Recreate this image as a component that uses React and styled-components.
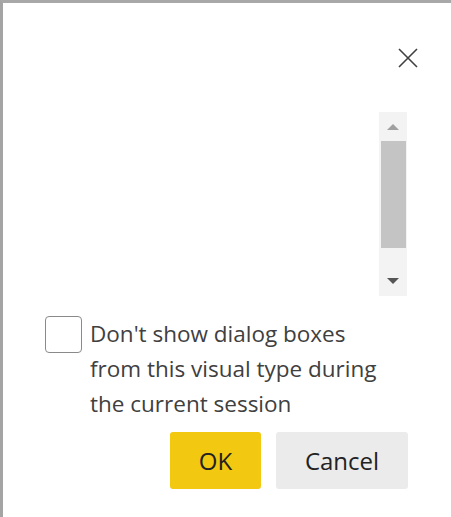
import styled, { createGlobalStyle } from "styled-components"

const Global = createGlobalStyle`
html, body {
  margin: 0;
  padding: 0;
  background: #ffffff;
  overflow: hidden;
}
`

const Dialog = styled.div`
box-sizing: border-box;
width: 451px;
height: 517px;
background: #ffffff;
border-top: 3px solid #a8a8a8;
border-left: 3px solid #a4a4a4;
display: flex;
flex-direction: column;
font-family: "Open Sans", "Noto Sans", sans-serif;
`

const Header = styled.div`
display: flex;
justify-content: flex-end;
padding: 43px 31px 0 0;
`

const CloseButton = styled.button`
width: 24px;
height: 24px;
padding: 0;
border: none;
background: transparent;
display: flex;
align-items: center;
justify-content: center;
cursor: pointer;
`

const Body = styled.div`
display: flex;
justify-content: flex-end;
padding: 42px 44px 0 0;
`

const ScrollTrack = styled.div`
width: 28px;
height: 184px;
background: #f3f3f3;
display: flex;
flex-direction: column;
align-items: center;
`

const ArrowCell = styled.div`
height: ${props => props.h}px;
width: 100%;
display: flex;
align-items: ${props => props.align};
justify-content: center;
`

const Arrow = styled.div`
width: 0;
height: 0;
border-left: 6px solid transparent;
border-right: 6px solid transparent;
${props => props.down
  ? "border-top: 6px solid #555555; margin-bottom: 12px;"
  : "border-bottom: 6px solid #a0a0a0; margin-top: 12px;"}
`

const Thumb = styled.div`
width: 25px;
height: 107px;
background: #c4c4c4;
`

const CheckRow = styled.label`
display: flex;
align-items: flex-start;
gap: 8px;
padding: 20px 0 0 42px;
cursor: pointer;
`

const Box = styled.span`
box-sizing: border-box;
flex: none;
width: 37px;
height: 37px;
border: 1.5px solid #8a8a8a;
border-radius: 4px;
background: #ffffff;
`

const CheckText = styled.span`
width: 308px;
font-size: 22.5px;
line-height: 35px;
color: #404040;
`

const Buttons = styled.div`
display: flex;
justify-content: flex-end;
gap: 15px;
padding: 11px 43px 0 0;
`

const Button = styled.button`
box-sizing: border-box;
width: ${props => props.w}px;
height: 57px;
border: none;
border-radius: 3px;
background: ${props => props.primary ? "#f2c811" : "#ebebeb"};
color: #222222;
font-family: "Open Sans", "Noto Sans", sans-serif;
font-size: 24px;
cursor: pointer;
`

const App = () => {
  return (
    <>
      <Global />
      <Dialog>
        <Header>
          <CloseButton aria-label="Close">
            <svg width="20" height="20" viewBox="0 0 20 20">
              <path d="M1 1 L19 19 M19 1 L1 19" stroke="#404040" strokeWidth="1.6" fill="none" />
            </svg>
          </CloseButton>
        </Header>

        <Body>
          <ScrollTrack>
            <ArrowCell h={29} align="flex-start">
              <Arrow />
            </ArrowCell>
            <Thumb />
            <ArrowCell h={48} align="flex-end">
              <Arrow down />
            </ArrowCell>
          </ScrollTrack>
        </Body>

        <CheckRow>
          <Box />
          <CheckText>Don't show dialog boxes from this visual type during the current session</CheckText>
        </CheckRow>

        <Buttons>
          <Button primary w={91}>OK</Button>
          <Button w={132}>Cancel</Button>
        </Buttons>
      </Dialog>
    </>
  )
}

export default App
